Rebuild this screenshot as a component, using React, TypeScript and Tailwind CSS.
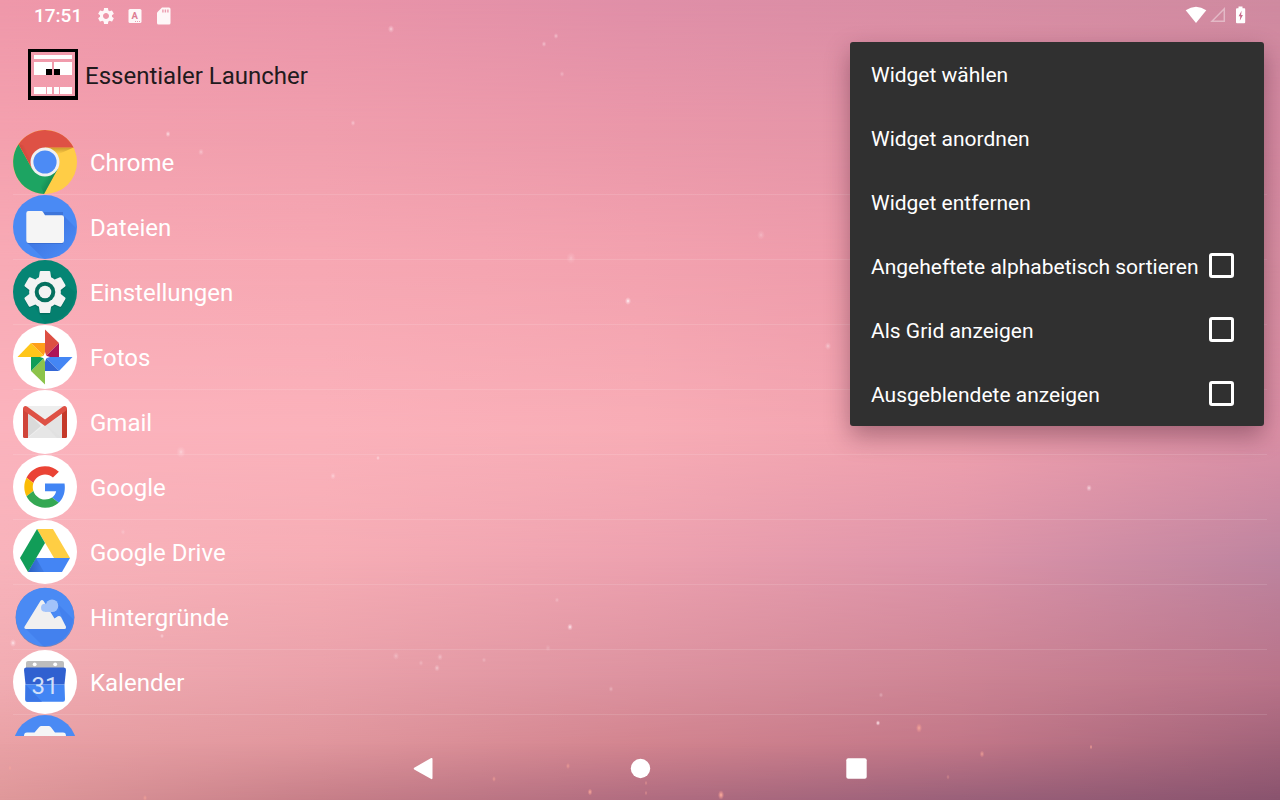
import type { ReactNode } from "react";

const GEAR =
  "M19.14 12.94c.04-.3.06-.61.06-.94 0-.32-.02-.64-.07-.94l2.03-1.58c.18-.14.23-.41.12-.61l-1.92-3.32c-.12-.22-.37-.29-.59-.22l-2.39.96c-.5-.38-1.03-.7-1.62-.94l-.36-2.54c-.04-.24-.24-.41-.48-.41h-3.84c-.24 0-.43.17-.47.41l-.36 2.54c-.59.24-1.13.57-1.62.94l-2.39-.96c-.22-.08-.47 0-.59.22L2.74 8.87c-.12.21-.08.47.12.61l2.03 1.58c-.05.3-.09.63-.09.94s.02.64.07.94l-2.03 1.58c-.18.14-.23.41-.12.61l1.92 3.32c.12.22.37.29.59.22l2.39-.96c.5.38 1.03.7 1.62.94l.36 2.54c.05.24.24.41.48.41h3.84c.24 0 .44-.17.47-.41l.36-2.54c.59-.24 1.13-.56 1.62-.94l2.39.96c.22.08.47 0 .59-.22l1.92-3.32c.12-.22.07-.47-.12-.61l-2.01-1.58zM12 15.6c-1.98 0-3.6-1.62-3.6-3.6s1.62-3.6 3.6-3.6 3.6 1.62 3.6 3.6-1.62 3.6-3.6 3.6z";

function AppIcon({ children }: { children: ReactNode }) {
  return (
    <svg viewBox="0 0 64 64" className="size-16 shrink-0" aria-hidden="true">
      {children}
    </svg>
  );
}

function Disc({ fill = "#fff" }: { fill?: string }) {
  return <circle cx="32" cy="32" r="32" fill={fill} />;
}

const ChromeIcon = () => (
  <AppIcon>
    <defs>
      <linearGradient id="chrome-y" x1="0" y1="0" x2="0" y2="1">
        <stop offset="0" stopColor="#8a5a10" stopOpacity=".45" />
        <stop offset="1" stopColor="#8a5a10" stopOpacity="0" />
      </linearGradient>
      <linearGradient id="chrome-r" x1="0" y1="1" x2="1" y2=".5">
        <stop offset="0" stopColor="#7a1f16" stopOpacity=".5" />
        <stop offset=".6" stopColor="#7a1f16" stopOpacity="0" />
      </linearGradient>
      <linearGradient id="chrome-g" x1="1" y1=".4" x2=".4" y2="0">
        <stop offset="0" stopColor="#0a5a35" stopOpacity=".5" />
        <stop offset=".7" stopColor="#0a5a35" stopOpacity="0" />
      </linearGradient>
    </defs>
    <Disc fill="#ffcd46" />
    <path d="M32 17.5H60.6L46 24Z" fill="url(#chrome-y)" />
    <path d="M5.5 14.3A32 32 0 0 0 31 64L44.6 39.3 32 32 19.4 39.2Z" fill="#1da462" />
    <path d="M31 64L44.6 39.3 32 46.5 22 43Z" fill="url(#chrome-g)" />
    <path d="M5.5 14.3A32 32 0 0 1 60.6 17.5H32V32L19.4 39.2Z" fill="#de5145" />
    <path d="M5.5 14.3L28 17.5 19.4 39.2Z" fill="url(#chrome-r)" />
    <circle cx="32" cy="32" r="14.5" fill="#f1f1f1" />
    <circle cx="32" cy="32" r="11.6" fill="#4c8bf5" />
  </AppIcon>
);

const FilesIcon = () => (
  <AppIcon>
    <defs>
      <linearGradient id="files-s" x1="0" y1="0" x2="1" y2="1">
        <stop offset=".2" stopColor="#2a56c6" stopOpacity=".45" />
        <stop offset=".8" stopColor="#2a56c6" stopOpacity=".05" />
      </linearGradient>
    </defs>
    <Disc fill="#4a8af4" />
    <path d="M51 21L63 33A32 32 0 0 1 31 64L14 47.5Z" fill="url(#files-s)" />
    <path d="M15.5 17H50V49H15.5a2.3 2.3 0 0 1-2.2-2.2Z" fill="#2f5fc0" opacity=".5" />
    <path d="M15.5 16H28.4a2 2 0 0 1 1.6.9L32 20.3H48.8a2.2 2.2 0 0 1 2.2 2.2V45.7a2.2 2.2 0 0 1-2.2 2.2H15.5a2.2 2.2 0 0 1-2.2-2.2V18.2A2.2 2.2 0 0 1 15.5 16Z" fill="#f5f5f5" />
  </AppIcon>
);

const SettingsIcon = () => (
  <AppIcon>
    <Disc fill="#058574" />
    <path d="M37 12L62 32A31 31 0 0 1 32 63L22 48Z" fill="#00695c" opacity=".2" />
    <path d={GEAR} transform="translate(5.6 6.8) scale(2.2)" fill="#00574c" opacity=".45" />
    <path d={GEAR} transform="translate(5.6 5.6) scale(2.2)" fill="#f3f3f3" />
    <circle cx="32" cy="32" r="10.3" fill="#05705f" />
    <circle cx="32" cy="32" r="6.3" fill="#f3f3f3" />
  </AppIcon>
);

const PhotosIcon = () => (
  <AppIcon>
    <Disc />
    <path d="M32 4.5L46 18 32 32Z" fill="#dd4f43" />
    <path d="M46 18V32H32Z" fill="#ad1457" />
    <path d="M4.500 32L18 18 32 32Z" fill="#ffc61a" />
    <path d="M18 18H32V32Z" fill="#ff9f19" />
    <path d="M32 59.5L18 46 32 32Z" fill="#8cc34b" />
    <path d="M18 32H32L18 46Z" fill="#109d58" />
    <path d="M59.5 32L46 46 32 32Z" fill="#4486f4" />
    <path d="M32 32L46 46H32Z" fill="#3367d6" />
    <path d="M32 27L33.3 30.700 37 32 33.3 33.300 32 37 30.7 33.300 27 32 30.7 30.700Z" fill="#fff" />
  </AppIcon>
);

const GmailIcon = () => (
  <AppIcon>
    <Disc />
    <path d="M12 16H52V48H12Z" fill="#eeeeee" />
    <path d="M15 48L32 34.5 49 48Z" fill="#e6e6e6" />
    <path d="M15 23L28 36 15 47Z" fill="#dadada" />
    <path d="M32 35L49 25V48H44Z" fill="#dedede" opacity=".7" />
    <path d="M10 18.5L15 21V48H11.5A1.5 1.5 0 0 1 10 46.5Z" fill="#d0453a" />
    <path d="M54 18.5L49 21V48H52.5A1.5 1.5 0 0 0 54 46.5Z" fill="#c53929" />
    <path d="M10 18.5A2.5 2.5 0 0 1 14 16.5L32 29.5 50 16.5A2.5 2.5 0 0 1 54 18.5 3 3 0 0 1 52.6 21L32 36 11.4 21A3 3 0 0 1 10 18.5Z" fill="#de5145" />
  </AppIcon>
);

const GoogleIcon = () => (
  <AppIcon>
    <Disc />
    <g transform="translate(11.3 11.3) scale(.863)">
      <path fill="#ea4335" d="M24 9.5c3.54 0 6.71 1.22 9.21 3.6l6.85-6.85C35.9 2.38 30.47 0 24 0 14.62 0 6.51 5.38 2.56 13.22l7.98 6.19C12.43 13.72 17.74 9.5 24 9.5z" />
      <path fill="#4285f4" d="M46.98 24.55c0-1.57-.15-3.09-.38-4.55H24v9.02h12.94c-.58 2.96-2.26 5.48-4.78 7.18l7.73 6c4.51-4.18 7.09-10.36 7.09-17.65z" />
      <path fill="#fbbc05" d="M10.53 28.59c-.48-1.45-.76-2.99-.76-4.59s.27-3.14.76-4.59l-7.98-6.19C.92 16.46 0 20.12 0 24c0 3.88.92 7.54 2.56 10.78l7.97-6.19z" />
      <path fill="#34a853" d="M24 48c6.48 0 11.93-2.13 15.89-5.81l-7.73-6c-2.15 1.45-4.92 2.3-8.16 2.3-6.26 0-11.57-4.22-13.47-9.91l-7.98 6.19C6.51 42.62 14.62 48 24 48z" />
    </g>
  </AppIcon>
);

const DriveIcon = () => (
  <AppIcon>
    <defs>
      <linearGradient id="drive-s" x1="0" y1="0" x2="1" y2="0">
        <stop offset="0" stopColor="#2354b0" stopOpacity=".8" />
        <stop offset="1" stopColor="#2f66c9" stopOpacity=".3" />
      </linearGradient>
    </defs>
    <Disc />
    <path d="M24 9H40L57 38H41Z" fill="#ffce43" />
    <path d="M23 38H57L49 52H15Z" fill="#4485f4" />
    <path d="M23 38L31 52H15Z" fill="url(#drive-s)" />
    <path d="M24 9L32 23 15 52 7 38Z" fill="#119d58" />
  </AppIcon>
);

const WallpapersIcon = () => (
  <AppIcon>
    <circle cx="32" cy="32.6" r="29.4" fill="#4c6fb0" opacity=".7" />
    <circle cx="32" cy="32" r="29.2" fill="#4a8af4" />
    <path d="M44 18L60 34A29 29 0 0 1 30 61L12 43 53 43Z" fill="#3b78e7" opacity=".5" />
    <path d="M27.4 15.9Q29 14 30.6 15.9L41.5 33.5 44.8 31.3Q46.5 30.3 48 32L53 41.8Q53.5 44 51.5 44H13Q10.8 43.8 11.5 41.8Z" fill="#f0f0f0" />
    <circle cx="39" cy="20.8" r="6.3" fill="#a2c3fa" />
    <circle cx="32" cy="22.8" r="4" fill="#a2c3fa" />
    <path d="M32 22H40V26.9H32Z" fill="#a2c3fa" />
  </AppIcon>
);

const CalendarIcon = () => (
  <AppIcon>
    <Disc />
    <path d="M15 11H49Q51 11 51 13V19H13V13Q13 11 15 11Z" fill="#bdbdbd" />
    <circle cx="21.7" cy="14.3" r="1.9" fill="#fff" />
    <circle cx="42.2" cy="14.3" r="1.9" fill="#fff" />
    <path d="M13 17.5H51Q53.2 17.8 53 20L51.5 34.5H12.5L11 20Q10.8 17.8 13 17.5Z" fill="#3060d0" />
    <path d="M12.5 34.500H51.5L52 49.5Q52 51.7 50 51.7H14.5Q12.200 51.7 12.3 49.5Z" fill="#4285f4" />
    <path d="M12.5 34.5L29 51.7H14.5Q12.2 51.7 12.3 49.5Z" fill="#3a76e6" />
    <text x="32" y="44" textAnchor="middle" fontFamily="Roboto, sans-serif" fontWeight="400" fontSize="24" fill="#d3e0fa">
      31
    </text>
  </AppIcon>
);

const CameraIcon = () => (
  <AppIcon>
    <Disc fill="#4a8af4" />
    <path d="M28.5 11H35.5Q37 11 38 12.3L42 17.6H50Q53 17.6 53 21V46H11V21Q11 17.6 14 17.6H21.5L26 12.3Q27 11 28.5 11Z" fill="#f5f5f5" />
  </AppIcon>
);

const APPS = [
  { name: "Chrome", Icon: ChromeIcon },
  { name: "Dateien", Icon: FilesIcon },
  { name: "Einstellungen", Icon: SettingsIcon },
  { name: "Fotos", Icon: PhotosIcon },
  { name: "Gmail", Icon: GmailIcon },
  { name: "Google", Icon: GoogleIcon },
  { name: "Google Drive", Icon: DriveIcon },
  { name: "Hintergründe", Icon: WallpapersIcon },
  { name: "Kalender", Icon: CalendarIcon },
];

const ACTIONS = ["Widget wählen", "Widget anordnen", "Widget entfernen"];
const OPTIONS = ["Angeheftete alphabetisch sortieren", "Als Grid anzeigen", "Ausgeblendete anzeigen"];

/* x, y, radius, opacity of the sparkles in the wallpaper */
const SPARKS = [
  [391, 29, 2, 0.6], [556, 36, 1.5, 0.5], [544, 44, 1.5, 0.5], [562, 74, 1.5, 0.35], [353, 123, 1.5, 0.5],
  [168, 134, 1.6, 0.8], [201, 152, 1.8, 0.45], [571, 258, 3, 0.3], [761, 235, 2.5, 0.3], [628, 301, 2, 1],
  [828, 346, 2, 0.5], [181, 452, 3, 0.45], [378, 458, 1.2, 0.7], [333, 476, 1.8, 0.5], [1089, 488, 1.8, 0.7],
  [13, 643, 2, 0.8], [162, 636, 1.3, 0.6], [570, 627, 1.8, 0.9], [557, 600, 1.4, 0.35], [396, 656, 2, 0.35],
  [440, 657, 1.8, 0.4], [437, 668, 1.8, 0.5], [421, 663, 1.5, 0.3], [611, 689, 1.5, 0.35], [878, 723, 1.4, 1],
  [881, 695, 1.4, 0.35], [123, 532, 1.5, 0.3], [484, 660, 1.4, 0.3], [548, 648, 1.8, 0.2],
];
const EMBERS = [
  [919, 728, 2.4, 0.8], [982, 754, 1.8, 0.7], [1091, 747, 1.2, 0.8], [721, 795, 2.4, 1], [590, 792, 1.8, 0.9],
  [568, 766, 1.6, 0.6], [494, 779, 1.5, 0.6], [646, 783, 1.2, 0.5], [646, 793, 1.2, 0.5], [145, 798, 1.6, 0.6],
  [10, 768, 1.4, 0.5], [948, 777, 1.4, 0.4],
];

function Wallpaper() {
  return (
    <div className="absolute inset-0 -z-10 overflow-hidden" aria-hidden="true">
      <div className="absolute inset-0 bg-[linear-gradient(90deg,#ef98aa,#ea94a9,#e08fa8,#d88da4,#cf8aa0)]" />
      <div className="absolute inset-0 bg-[linear-gradient(90deg,#f4a0ae,#f09ead,#ea97a9,#e294a7,#d68aa2)] [mask-image:linear-gradient(transparent_0%,black_16%)]" />
      <div className="absolute inset-0 bg-[linear-gradient(90deg,#f8aab5,#f7a8b3,#f3a2af,#ec99a9,#d98fa3)] [mask-image:linear-gradient(transparent_16%,black_33%)]" />
      <div className="absolute inset-0 bg-[linear-gradient(90deg,#fbb3bd,#fbb2bb,#f8adb6,#f0a1ae,#dc90a6)] [mask-image:linear-gradient(transparent_33%,black_54%)]" />
      <div className="absolute inset-0 bg-[linear-gradient(90deg,#f8b3bb,#f6adb5,#eda1af,#dd94a9,#bd849f)] [mask-image:linear-gradient(transparent_54%,black_70%)]" />
      <div className="absolute inset-0 bg-[linear-gradient(90deg,#f1acb2,#e9a0a9,#dc929f,#cd8494,#b97389)] [mask-image:linear-gradient(transparent_70%,black_85%)]" />
      <div className="absolute inset-0 bg-[linear-gradient(90deg,#e9a1a5,#e0969d,#d2848f,#c27788,#a2637a)] [mask-image:linear-gradient(transparent_85%,black_93%)]" />
      <div className="absolute inset-0 bg-[linear-gradient(90deg,#df989a,#c67e88,#b06c80,#996079,#89536e)] [mask-image:linear-gradient(transparent_93%,black_100%)]" />
      <svg viewBox="0 0 1280 800" preserveAspectRatio="xMidYMid slice" className="absolute inset-0 size-full">
        <defs>
          <radialGradient id="spark">
            <stop offset="0" stopColor="#fff" />
            <stop offset=".35" stopColor="#ffe6ec" stopOpacity=".6" />
            <stop offset="1" stopColor="#ffdbe4" stopOpacity="0" />
          </radialGradient>
          <radialGradient id="ember">
            <stop offset="0" stopColor="#ffb3a0" />
            <stop offset="1" stopColor="#ff9a90" stopOpacity="0" />
          </radialGradient>
        </defs>
        {SPARKS.map(([x, y, r, o]) => (
          <ellipse key={`${x}-${y}`} cx={x} cy={y} rx={r * 1.6} ry={r * 2} fill="url(#spark)" opacity={o} />
        ))}
        {EMBERS.map(([x, y, r, o]) => (
          <ellipse key={`${x}-${y}`} cx={x} cy={y} rx={r * 1.3} ry={r * 2} fill="url(#ember)" opacity={o} />
        ))}
      </svg>
    </div>
  );
}

function StatusBar() {
  return (
    <div className="flex h-8 shrink-0 items-center justify-between pr-8 pl-[34px] text-white">
      <div className="flex items-center">
        <time className="mr-[14px] text-[19px] leading-8 font-medium">17:51</time>
        <svg viewBox="0 0 24 24" className="mr-3 size-5" fill="#fff" fillOpacity=".92" aria-hidden="true">
          <path d={GEAR} />
        </svg>
        <svg viewBox="0 0 14 14" className="mr-[14px] size-[14px]" aria-hidden="true">
          <rect x=".5" y="0" width="13" height="14" rx="1.5" fill="#fff" fillOpacity=".92" />
          <text x="6.8" y="10" textAnchor="middle" fontFamily="Roboto, sans-serif" fontWeight="700" fontSize="9.5" fill="#dd7c93">A</text>
          <path d="M7 12h1v1H7zM9 12h1v1H9zM11 12h1v1h-1z" fill="#e9a0b0" />
        </svg>
        <svg viewBox="0 0 16 18" className="h-[18px] w-4" aria-hidden="true">
          <path d="M6 .5H13A1.500 1.5 0 0 1 14.5 2V16A1.5 1.5 0 0 1 13 17.5H2.5A1.5 1.5 0 0 1 1 16V5.5Z" fill="#fff" fillOpacity=".92" />
          <path d="M6.2 2.5h1.4v3H6.2zM8.7 2.5h1.4v3H8.7zM11.2 2.5h1.4v3h-1.4z" fill="#eb9db0" />
        </svg>
      </div>
      <div className="flex items-center pb-0.5">
        <svg viewBox="0 0 22 18" className="mr-[3px] h-[18px] w-[22px]" aria-hidden="true">
          <path d="M11 17L.7 4.3Q11-2.9 21.3 4.3Z" fill="#fff" />
        </svg>
        <svg viewBox="0 0 16 16" className="mr-2 size-4" aria-hidden="true">
          <path d="M14.3 1.8V14.3H2Z" fill="none" stroke="#fff" strokeOpacity=".4" strokeWidth="1.5" />
        </svg>
        <svg viewBox="0 0 14 18" className="h-[18px] w-[14px]" aria-hidden="true">
          <path d="M4.500 .5H8.500V2.2H10.400A1 1 0 0 1 11.200 3.200V16.300A1 1 0 0 1 10.200 17.200H3A1 1 0 0 1 2 16.300V3.200A1 1 0 0 1 3 2.200H4.500Z" fill="#fff" />
          <path d="M7.600 4.800L4.600 10.300H6.300L5.800 14.800 8.900 9.100H7.100Z" fill="#c9688a" />
        </svg>
      </div>
    </div>
  );
}

function Header() {
  return (
    <header className="flex h-[98px] shrink-0 items-start gap-[7px] pt-[17px] pl-7">
      <svg viewBox="0 0 50 51" className="h-[51px] w-[50px]" shapeRendering="crispEdges" aria-hidden="true">
        <path fillRule="evenodd" d="M0 0H50V51H0ZM3 3V47H47V3Z" fill="#000" />
        <path d="M6 6H44V10H6ZM6 13H24V26H6ZM26 13H44V26H26ZM6 38H18V45H6ZM19 38H24V45H19ZM26 38H31V45H26ZM32 38H44V45H32Z" fill="#fff" />
        <path d="M18 20H24V26H18ZM26 20H32V26H26Z" fill="#000" />
      </svg>
      <h1 className="text-2xl leading-[55px] text-[#211a1d]">Essentialer Launcher</h1>
    </header>
  );
}

function AppList() {
  return (
    <ul className="min-h-0 flex-1 overflow-hidden px-[13px]">
      {APPS.map(({ name, Icon }) => (
        <li key={name} className="border-b border-white/12">
          <button type="button" className="flex w-full items-center gap-[13px] text-left text-2xl leading-[66px] text-white">
            <Icon />
            <span className="h-16">{name}</span>
          </button>
        </li>
      ))}
      <li>
        <button type="button" aria-label="Kamera" className="flex w-full items-center">
          <CameraIcon />
        </button>
      </li>
    </ul>
  );
}

function OverflowMenu() {
  return (
    <div className="absolute top-[42px] right-4 w-[414px] rounded-[3px] bg-[#303030] text-[21px] leading-[66px] text-white shadow-[0_10px_24px_rgba(60,20,40,0.4)]">
      {ACTIONS.map((label) => (
        <button key={label} type="button" className="block h-16 w-full px-[21px] text-left">
          {label}
        </button>
      ))}
      {OPTIONS.map((label) => (
        <label key={label} className="flex h-16 items-center justify-between pr-[30px] pl-[21px]">
          <span className="h-16 whitespace-nowrap">{label}</span>
          <input type="checkbox" className="mb-0.5 size-[25px] shrink-0 appearance-none rounded-[3px] border-3 border-white checked:bg-white" />
        </label>
      ))}
    </div>
  );
}

function NavBar() {
  return (
    <nav className="flex h-16 shrink-0 items-center justify-center gap-[168px]">
      <button type="button" aria-label="Zurück" className="size-12">
        <svg viewBox="0 0 48 48" className="size-12">
          <path d="M14.2 25.4Q13.2 24.5 14.2 23.7L31.2 14Q32.5 13.5 32.5 15V34Q32.5 35.5 31.2 35Z" fill="#fff" />
        </svg>
      </button>
      <button type="button" aria-label="Startbildschirm" className="size-12">
        <svg viewBox="0 0 48 48" className="size-12">
          <circle cx="24.5" cy="24.5" r="9.7" fill="#fff" />
        </svg>
      </button>
      <button type="button" aria-label="Übersicht" className="size-12">
        <svg viewBox="0 0 48 48" className="size-12">
          <rect x="14.3" y="14.3" width="20.4" height="20.4" rx="2" fill="#fff" />
        </svg>
      </button>
    </nav>
  );
}

export default function App() {
  return (
    <div className="relative isolate flex h-screen flex-col overflow-hidden font-[Roboto,sans-serif]">
      <Wallpaper />
      <StatusBar />
      <Header />
      <AppList />
      <NavBar />
      <OverflowMenu />
    </div>
  );
}
